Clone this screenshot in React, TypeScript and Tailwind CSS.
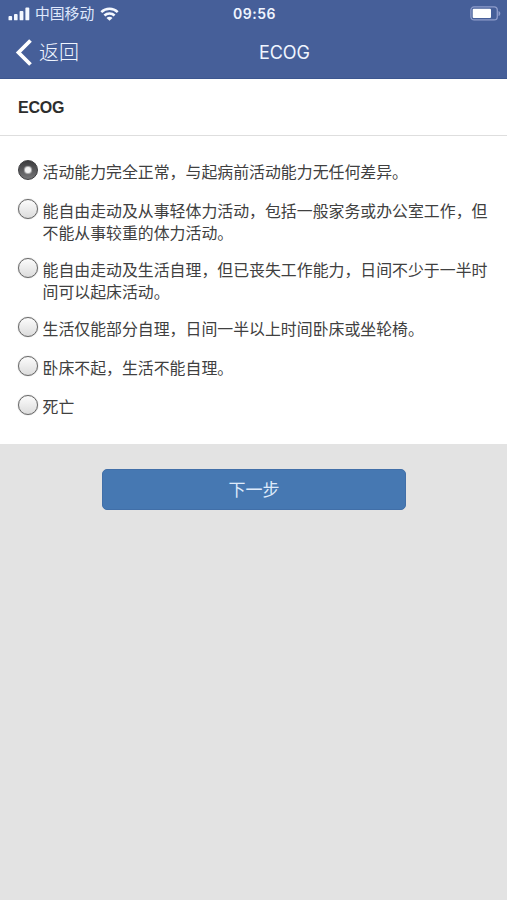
import React, { useState } from "react";

const OPTIONS: string[][] = [
  ["活动能力完全正常，与起病前活动能力无任何差异。"],
  ["能自由走动及从事轻体力活动，包括一般家务或办公室工作，但", "不能从事较重的体力活动。"],
  ["能自由走动及生活自理，但已丧失工作能力，日间不少于一半时", "间可以起床活动。"],
  ["生活仅能部分自理，日间一半以上时间卧床或坐轮椅。"],
  ["卧床不起，生活不能自理。"],
  ["死亡"],
];

function SignalIcon() {
  return (
    <svg width="22" height="14" viewBox="0 0 22 14" fill="#f4f8ff">
      <rect x="0.5" y="9" width="3.6" height="4.3" rx="0.9" />
      <rect x="6" y="7" width="3.6" height="6.3" rx="0.9" />
      <rect x="11.6" y="4" width="3.8" height="9.3" rx="0.9" />
      <rect x="17.4" y="0.6" width="3.9" height="12.7" rx="0.9" />
    </svg>
  );
}

function WifiIcon() {
  return (
    <svg width="19" height="14" viewBox="0 0 19 14" fill="none" stroke="#f4f8ff" strokeWidth="2.5">
      <path d="M1.3 5.2a11.6 11.6 0 0 1 16.4 0" />
      <path d="M4.4 8.5a7.2 7.2 0 0 1 10.2 0" />
      <path d="M9.5 13.8 6.5 10.9a4.2 4.2 0 0 1 6 0Z" fill="#f4f8ff" stroke="none" />
    </svg>
  );
}

function BatteryIcon() {
  return (
    <svg width="31" height="16" viewBox="0 0 31 16">
      <rect x="0.9" y="0.9" width="26.4" height="13" rx="3.2" fill="none" stroke="#8f9dcb" strokeWidth="1.3" />
      <rect x="2.7" y="2.8" width="18.3" height="9.3" rx="1" fill="#fff" />
      <path d="M28.5 4.9c2.4.9 2.4 4.2 0 5.1Z" fill="#8f9dcb" />
    </svg>
  );
}

function Radio({ checked }: { checked: boolean }) {
  return checked ? (
    <span className="-mt-px mr-[5px] flex size-5 shrink-0 items-center justify-center rounded-full border border-[#3c3c3e] bg-linear-to-b from-[#3c3c3e] to-[#777779]">
      <span className="size-1.5 rounded-full bg-[#f2f2f2] shadow-[0_0_1px_1px_#b4b4b6]" />
    </span>
  ) : (
    <span className="-mt-px mr-[5px] size-5 shrink-0 rounded-full border-[1.5px] border-[#666] bg-linear-to-b from-[#fcfcfc] to-[#dcdcdc] shadow-[0_0_1px_#777]" />
  );
}

export default function App() {
  const [selected, setSelected] = useState(0);
  return (
    <div lang="zh-CN" className="flex h-[900px] w-[507px] flex-col overflow-hidden bg-[#e3e3e3] font-['Liberation_Sans','Noto_Sans_CJK_SC',sans-serif]">
      <header className="h-[79px] shrink-0 border-b border-[#3c568f] bg-[#465f99] text-[#f0f5ff]">
        <div className="grid h-[27px] grid-cols-[1fr_auto_1fr] items-center pr-[6px] pl-2">
          <div className="flex items-center">
            <SignalIcon />
            <span className="ml-[5px] pt-px text-[14.8px] leading-5 text-[#dfe8fc]">中国移动</span>
            <span className="ml-[6px]"><WifiIcon /></span>
          </div>
          <span className="font-['Inter',sans-serif] text-[14px] leading-5 font-semibold tracking-[0.5px]">09:56</span>
          <div className="flex justify-end"><BatteryIcon /></div>
        </div>
        <div className="grid h-[51px] grid-cols-[259px_auto_1fr] items-center">
          <button className="flex items-center pl-[15px] text-[20px] leading-6 font-light">
            <svg width="18" height="28" viewBox="0 0 18 28" fill="none" stroke="#fff" strokeWidth="3.8">
              <path d="M15.5 1.5 3.5 13.5l12 12" />
            </svg>
            <span className="ml-[6px] pt-px">返回</span>
          </button>
          <h1 className="font-['Inter',sans-serif] text-[18px] leading-6 font-normal tracking-[-0.1px]">ECOG</h1>
        </div>
      </header>
      <main className="h-[365px] shrink-0 bg-white">
        <h2 className="flex h-[57px] items-center border-b border-[#dedede] pt-[2px] pl-[18px] text-[16px] font-bold tracking-[-0.2px] text-[#2d2d2d]">ECOG</h2>
        <div className="flex flex-col gap-[15px] pt-[25px] pl-[17.5px]">
          {OPTIONS.map((lines, i) => (
            <button key={i} role="radio" aria-checked={selected === i} onClick={() => setSelected(i)} className="flex min-h-6 items-start text-left">
              <Radio checked={selected === i} />
              <span className="-mb-px pt-px text-[15.9px] leading-[22px] whitespace-nowrap text-[#404040]">
                {lines.map((line) => (
                  <span key={line} className="block">{line}</span>
                ))}
              </span>
            </button>
          ))}
        </div>
      </main>
      <button className="mt-[25px] ml-[102px] h-[41px] w-[304px] rounded-[5px] border border-[#416fa8] bg-[#4678b2] pt-[2px] text-[17px] leading-5 font-normal text-[#dfebfb]">
        下一步
      </button>
    </div>
  );
}
